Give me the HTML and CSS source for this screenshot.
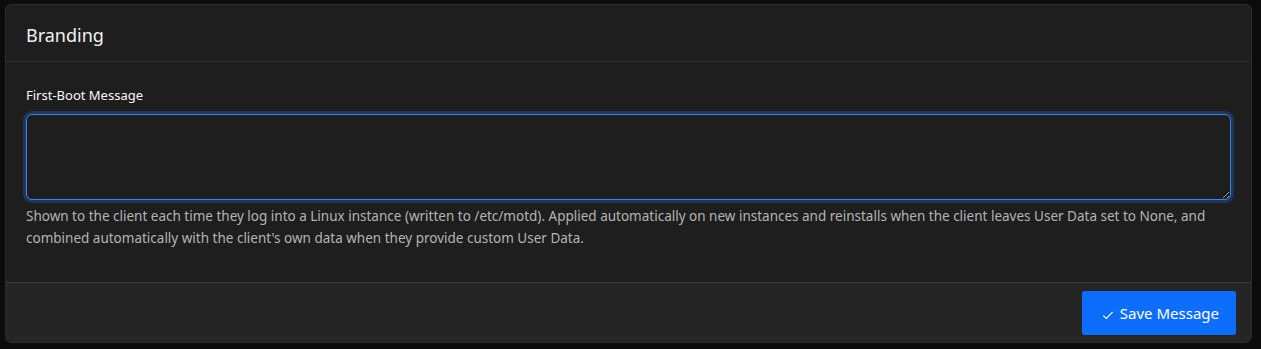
FILE: index.html
```html
<!DOCTYPE html>
<html lang="en">

<head>
    <meta charset="UTF-8">
    <meta name="viewport" content="width=device-width, initial-scale=1.0">
    <title>Branding</title>

    <link rel="stylesheet" href="styles.css">

</head>

<body>
    <div class="card">
        <div class="card-header">
            <h2>Branding</h2>
        </div>

        <div class="card-body">
            <label class="form-label" for="motd">First-Boot Message</label>
            <textarea id="motd" class="form-control" rows="3" autofocus></textarea>
            <p class="form-text">Shown to the client each time they log into a Linux instance (written to /etc/motd). Applied automatically on new instances and reinstalls when the client leaves User Data set to None, and combined automatically with the client's own data when they provide custom User Data.</p>
        </div>

        <div class="card-footer">
            <button class="btn-primary" type="button">
                <svg class="icon" viewBox="0 0 16 16" width="14" height="14">
                    <path d="M2.5 8.5 L6 12 L13.5 4.5" fill="none" stroke="currentColor" stroke-width="1.3" />
                </svg>
                Save Message
            </button>
        </div>
    </div>
</body>

</html>
```

FILE: styles.css
```css
* {
    margin: 0;
    padding: 0;
    box-sizing: border-box;
}

body {
    background: #0b0b0b;
    padding: 4px 9px 5px 5px;
    font-family: "Noto Sans", "Open Sans", sans-serif;
    color: #e6e6e6;
}

.card {
    background: #1e1e1e;
    border: 1px solid #2c2c2c;
    border-radius: 6px;
    overflow: hidden;
}

.card-header {
    height: 57px;
    display: flex;
    align-items: center;
    padding: 3px 20px 0;
    border-bottom: 1px solid #2e2e2e;
}

.card-header h2 {
    font-size: 18px;
    font-weight: 400;
    color: #f2f2f2;
}

.card-body {
    padding: 24px 20px 33px;
}

.form-label {
    display: block;
    font-size: 13px;
    font-weight: 400;
    color: #fafafa;
    margin-bottom: 10px;
}

.form-control {
    display: block;
    width: 100%;
    height: 86px;
    background: #1e1e1e;
    color: #eee;
    border: 1px solid #3b82f6;
    border-radius: 6px;
    box-shadow: 0 0 0 3px rgba(37, 99, 200, 0.35);
    padding: 6px 12px;
    font-family: inherit;
    font-size: 15px;
    outline: none;
    resize: vertical;
}

.form-text {
    margin-top: 5px;
    font-size: 13.5px;
    line-height: 22px;
    color: #b4b4b4;
}

.card-footer {
    background: #252525;
    border-top: 1px solid #3a3a3a;
    padding: 8px 15px 7px;
    display: flex;
    justify-content: flex-end;
}

.btn-primary {
    height: 44px;
    padding: 0 17px 0 19px;
    background: #0d6efd;
    color: #fff;
    border: none;
    border-radius: 3px;
    font-family: inherit;
    font-size: 15px;
    display: flex;
    align-items: center;
    gap: 5px;
}

.btn-primary .icon {
    margin-top: 3px;
}
```
